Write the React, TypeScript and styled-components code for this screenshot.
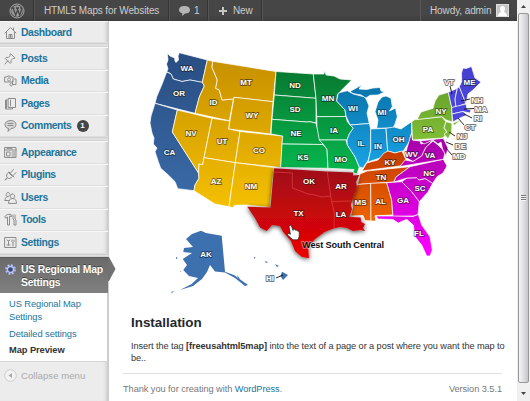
import React from "react";
import styled, { createGlobalStyle, css } from "styled-components";

const GlobalStyle = createGlobalStyle`
  * { box-sizing: border-box; }
  body { margin: 0; background: #fff; overflow: hidden; font-family: "Liberation Sans", Arial, sans-serif; }
`;

const Window = styled.div`display: flex; width: 530px; height: 401px; overflow: hidden;`;
const Page = styled.div`width: 517px; display: flex; flex-direction: column;`;
const AdminBar = styled.header`
  height: 21px; flex: none; display: flex; color: #ccc; font-size: 10px; letter-spacing: -0.13px;
  background: linear-gradient(#464646 70%, #3e3e3e);
`;
const BarItem = styled.div<{ $w: number; $pad?: number; $gap?: number }>`
  width: ${p => p.$w}px; padding-left: ${p => p.$pad ?? 9}px; display: flex; align-items: center;
  gap: ${p => p.$gap ?? 5}px; border-right: 1px solid #555; box-shadow: inset -1px 0 #353535; white-space: nowrap;
`;
const Account = styled.div`
  margin-left: auto; width: 97px; padding-left: 9px; display: flex; align-items: center; gap: 5px;
  border-left: 1px solid #595959; white-space: nowrap; letter-spacing: -0.1px;
`;
const Body = styled.div`display: flex; flex: 1; min-height: 0;`;
const Sidebar = styled.nav`
  width: 109px; flex: none; background: #ececec; border-right: 1px solid #ccc;
  box-shadow: inset -4px 0 4px -3px #bbb; display: flex; flex-direction: column;
`;
const MenuRow = styled.a<{ $first?: boolean }>`
  height: ${p => (p.$first ? 22 : 22.5)}px; flex: none; display: flex; align-items: center; padding: 0 0 0 4px; gap: 4px;
  color: #21759b; font-size: 10.4px; letter-spacing: -0.4px; font-weight: bold; white-space: nowrap;
  border-top: 1px solid #f8f8f8; border-bottom: 1px solid #dedede;
`;
const IconBox = styled.svg`
  width: 13px; height: 13px; flex: none; fill: none; stroke: #8c8c8c; stroke-width: 1; stroke-linejoin: round; stroke-linecap: round;
`;
const Separator = styled.div<{ $h: number }>`
  height: ${p => p.$h}px; flex: none; background: #dfdfdf; border-top: 1px solid #cfcfcf; border-bottom: 1px solid #d4d4d4;
`;
const Count = styled.span`
  width: 12px; height: 12px; margin-left: 1px; border-radius: 6px; background: #464646; color: #fff;
  font-size: 8px; line-height: 12px; text-align: center; letter-spacing: 0;
`;
const Current = styled.div`
  position: relative; height: 36px; flex: none; display: flex; gap: 5px; padding: 5px 0 0 5px; color: #fff;
  font-size: 10.4px; line-height: 13.3px; font-weight: bold; letter-spacing: -0.2px; white-space: nowrap;
  background: linear-gradient(#6a6a6a, #808080); border-top: 1px solid #5c5c5c; text-shadow: 0 -1px #444;
`;
const Arrow = styled.svg`position: absolute; left: 108px; top: -1px; width: 8px; height: 24px;`;
const SubMenu = styled.div`
  height: 69px; flex: none; background: #fff; border-bottom: 1px solid #d5d5d5; margin-right: 1px;
  padding: 5px 0 0 9px; display: flex; flex-direction: column; gap: 3px; font-size: 9.3px; line-height: 13.5px;
  color: #21759b; white-space: nowrap; letter-spacing: -0.07px;
`;
const SubItem = styled.a<{ $on?: boolean }>`
  ${p => p.$on && css`color: #333; font-weight: bold;`}
`;
const Collapse = styled.div`
  height: 28px; display: flex; align-items: center; gap: 4px; padding-left: 4px; color: #aaa; font-size: 9.6px; letter-spacing: 0.02px;
`;
const Main = styled.main`flex: 1; background: #fff; display: flex; flex-direction: column; min-width: 0;`;
const MapArt = styled.svg`
  width: 408px; height: 280px; flex: none; display: block; overflow: visible;
  font-family: "Liberation Sans", Arial, sans-serif;
`;
const Heading = styled.h2`
  margin: 12px 0 0 22px; font-size: 13.4px; line-height: 20px; color: #23282d;
`;
const Copy = styled.p`
  margin: 7px 0 0 22px; font-size: 9.2px; letter-spacing: -0.075px; line-height: 12px; color: #333; white-space: nowrap;
`;
const Footer = styled.footer`
  margin: 9px 15px 0 14px; border-top: 1px solid #dfdfdf; padding-top: 9px; display: flex; justify-content: space-between;
  font-size: 9.2px; line-height: 13px; color: #777; white-space: nowrap; letter-spacing: -0.04px;
`;
const Link = styled.a`color: #21759b;`;
const Scroll = styled.div`
  width: 13px; background: #f0f0f0; display: flex; flex-direction: column; align-items: center;
`;
const ScrollEnd = styled.svg`width: 13px; height: 13px; flex: none;`;
const Thumb = styled.div`
  width: 11px; height: 370px; border: 1px solid #979797; border-radius: 2px; display: flex; align-items: center; justify-content: center;
  background: linear-gradient(90deg, #f5f5f5, #e2e2e5 45%, #c5c5cb);
`;
const Grip = styled.div`width: 5px; height: 6px; background: repeating-linear-gradient(#777 0 1px, #f5f5f5 1px 2px);`;

const icons: Record<string, React.ReactNode> = {
  Dashboard: <path d="M1 7 6.5 1.5 12 7M2.5 6.5v6h8v-6M5 12V8.5h3V12M6.5 8.5V12M9.5 2v2" />,
  Posts: <path d="m7 2 4 4-1 .7-1-.3-2 2 .2 2-1 1-5-5 1-1 2 .2 2-2-.2-1zM4 8.5 1 12" />,
  Media: <path d="M1 3h2l.7-1h2l.8 1H9v5H1zM5 4a1.5 1.5 0 1 0 .1 0M10.5 5H12v5.5H8.5V7M8.5 10.5a1.3 1.3 0 1 1-1.4-1.2" />,
  Pages: <path d="M4.5 1.5h7v9h-7zM3 3H1.5v9h7v-1.500M2.500 3v8M6.500 3v6" />,
  Comments: <path fill="#d6d6d6" d="M6.500 1.500C10 1.500 12 3 12 5.500s-2 4-5 4l-3 3 .5-3C2 9 1 7.500 1 5.500s2-4 5.500-4zM4 4.500h5M4 6.500h5" />,
  Appearance: <path d="M1 1.500h11v10H1zM1 4h11M3 6h3v4H3zM8 6h3M8 8h3M8 10h3M3 2.700h5" />,
  Plugins: <path d="m4.500 4.500 4 4c-1.500 2-3.500 2.300-5 1.500L2 11.500M4.500 4.500C2.500 5.500 2 8 3.200 9.500L1 12M5 4l5 5M6.500 5 9.500 1.500M9 7.500 12 4.500" />,
  Users: <path d="M4 1.500a2 2 0 1 0 .1 0M1 9.500c0-3 1-4 3-4M8.500 3a2.200 2.200 0 1 0 .1 0M4.500 12c0-3 1.500-4.500 4-4.500s4 1.500 4 4.500zM1 9.500h4" />,
  Tools: <path d="M1 3.500c1-2 3-2.500 6-2l.5 2-2-.3V12H3.500V4L2 5zM9 2v4l1 1v5h2V7l-1-1V2" />,
  Settings: <path d="M1 1.500h11v10H1zM3 4l1.500 1L6 4M4.500 5v4M3 9h3M8 4v1.500l1 1 1-1V4M9 6.500V10" />,
};

const MenuItem = ({ name, first, children }: { name: string; first?: boolean; children?: React.ReactNode }) => (
  <MenuRow $first={first}><IconBox viewBox="0 0 13 13">{icons[name]}</IconBox>{name}{children}</MenuRow>
);

const gradients: [string, string, string, number, number][] = [
  ["pacific", "#294f84", "#4073b2", 60, 240],
  ["mountain", "#c99200", "#f4c000", 65, 208],
  ["plains", "#087a31", "#05b64e", 72, 170],
  ["lakes", "#0873aa", "#19a4e5", 85, 168],
  ["south", "#c63d00", "#ed6300", 151, 220],
  ["atlantic", "#a900a9", "#fa00ff", 140, 250],
  ["mid", "#69a42c", "#80bd35", 92, 138],
  ["england", "#4640cf", "#4c48df", 66, 122],
  ["central", "#a51019", "#e60000", 175, 250],
];

const regions: [string, string[]][] = [
  ["pacific", [
    "167.300 53.300 170 56 174.700 58 175 61 176 62.500 178.500 60 178 56 179.300 52.700 207.300 60 202.300 82.300 190 80 182 81.500 173.300 79 171 74 166.700 71.500 168 69 166.500 64 168 60",
    "166.700 72 171 74 173.300 79 182 81.500 190 80 202.300 82.300 204.300 86 201 93 199.300 97 195 113.300 155 103.300 156.700 96.700 161.700 85",
    "155 103.300 177.300 110 172.300 132 198.500 173 199 178.300 195 185 194 190.700 177.700 188.700 175 181.700 168.300 175 160.700 168.300 158.300 161.700 155 151.700 157 148 153.300 144 154 138 152 133 150 123 151 116",
  ]],
  ["mountain", [
    "207.300 60 212.700 61.300 212 67.300 217.300 80 215.700 88.300 219.300 90 222 100 233.500 99 229.300 120.700 195 113.300 199.300 97 204.300 86 202.300 82.300",
    "212.700 61.300 276 71.500 273 101.700 234 97.300 233.500 99 222 100 219.300 90 215.700 88.300 217.300 80 212 67.300",
    "234 97.300 273 101.700 270.500 134 228.500 129",
    "177.300 110 212 118.300 204 157.700 202.700 164.700 199 164 198.500 173 172.300 132",
    "212 118.300 229.700 121 228.500 129 240 131.500 235.300 162.700 204 157.700",
    "240 131.500 282.700 136 280.700 167.500 235.300 162.700",
    "204 157.700 235.300 162.700 229 206.700 215 204 194 190.700 195 185 199 178.300 198.500 173 199 164 202.700 164.700",
    "235.300 162.700 274 167.500 270 207.300 246.700 205 234.300 205.300 233.300 207.700 229 206.700",
  ]],
  ["plains", [
    "276 71.500 313.300 74 316 98.300 274.300 95",
    "274.300 95 316 98.300 316 123 310 121.700 306.700 122 272 119.300",
    "272 119.300 306.700 122 310 121.700 316 123.300 318 131 320 140 323 144.500 282 144 282.700 136 271 134",
    "282 144 323 144.500 327 149.300 328 168.300 280.700 167.500",
    "313.300 74 324 74 324.700 70 326 75 334 76 340 79 351.700 80 341.700 90 337.300 95 336.700 101 345 110 346 116.500 316.700 116.700 316 98.300",
    "316.700 116.700 346 116.500 347.300 121.700 353.300 128.300 349.300 134 347 140 319.300 140 317 127",
    "319.300 140 346 140 347.300 145 355 156.700 359.300 167 357 174 353 172.500 354 169.500 328 168.300 327 149.300 323 144",
  ]],
  ["lakes", [
    "338.300 93 347.300 90.700 353.300 94 365 97 367 101 369 106 367 113 369.300 123.500 350 125 346 116 345 110 336.700 101",
    "350 91.500 361.700 85 359 89 366.700 89.500 373 88 380 87.500 381 91 385 91.700 378 95 370 95.300 366 98 361 95 353 93.500",
    "382 97 386 96 391 98.300 392.300 106.700 389.500 111 395.500 108 397.300 116.700 395 124 393 128 376.700 128.300 378 120 375 111.700 378 102",
    "350 125 369.300 123.500 370.700 129 370.700 150 368.300 160 363 168 359.300 167 355 156.700 347.300 145 347 140 349.300 134 353.300 128",
    "370.700 129 386 128.300 387.700 151 380 158 368 162 370.700 150",
    "386 128.300 394 127 401 129 411.700 121.700 411.700 132 409.300 141.700 403.300 151 395 153 387.700 151",
  ]],
  ["south", [
    "362 171 366.700 163 378 160 384 153 388 151 395 153 402 151 406 160 400 166",
    "360 174 367 171 410 166.700 396 177 394 182 357.500 184.500",
    "357.500 184.500 370.700 183.300 371 221 365 220.500 363 215.500 350.700 216 352.700 207 352 200 355 190",
    "370.700 183.300 386.700 182.700 391.700 200 392.700 215 375 215.700 375.700 221 371 221",
  ]],
  ["atlantic", [
    "386.700 182.700 401.700 181.700 411.700 191.700 419.300 201.700 418 214.500 413.500 216 393 216.500 391.700 200",
    "376 216 393 216 413 216.500 418.300 214.500 421.700 225 430 236.700 432.300 250 430 256 426.700 256 421.700 245 415 236.700 413.300 225 406.700 219.300 398.300 223 393 219.500 378 219",
    "401.700 181.700 407 178 416.700 177.700 419 180 425 178.500 432.700 183.300 428 192 419.300 201.700 411.700 191.700",
    "410 166.700 443.300 159.300 447 166 443 173 437 176.700 432.700 183.300 425 178.500 419 180 416.700 177.700 407 178 394 182 396 177",
    "411.700 133 412.500 140 420 141 421 144 433 140 426 147 421.700 156 413 161.500 405 157 407 148",
    "405 160 413 161.500 421.700 156 426 147 433 141 438 145 442 149 445 153 443.300 159.300 400 166.500",
    "420 141 443.300 138.300 448 148 446 156 442.500 149 441 142 438 144 433 140 424 144",
  ]],
  ["mid", [
    "411.700 121.700 415 119.500 441.700 116.700 446 121.700 444 128 447 133 443 138 412.500 140",
    "417 119.500 421 112 433 108.300 435 101 439 95 448.300 92.300 451.700 107 452.300 122 446 120 441.700 116.700",
    "446 121.700 452 123.300 451.700 132 448 139 444 134 447 132 444 128",
    "453 123 461 120 454 125.500",
  ]],
  ["england", [
    "448.300 92.300 457.300 88.300 455 99 456 107 451.700 107.500",
    "457.300 88.300 459.300 86.700 466 103.500 456 107 455 99",
    "459.300 86.700 461.700 81.700 461.500 73 463 68 466 68.500 471.500 66.500 475 78 481 82 473 90 468 94 466 103.500",
    "451.700 107.500 466 104 467 109 471 110 470 113 463 111.500 452 114",
    "452 114 463 111.500 467 115 460 118 453 122",
  ]],
];

const islands = [
  "201 230.700 206 233 221.700 235.700 225 271.700 234 275 248 285 245 286 235 278 225 272.500 215 271.500 210 265 207 272 202 279 193 286 180 290 191.700 284 198 278 189 276 183.300 270 187 265 182.700 259 192 253 183.300 252 184 248 193 247 186 239 192 234",
  "282 271.700 288 275 283 280 280.500 276",
  "254 257 256 258 254 258.500", "265 261 268 262 266 263", "275 264 279 266 277 267",
  "237 275 240 279 238 278", "241 281 246 286 243 284", "176 257 178 258 176 259", "180 271 181 271 181 272",
  "171 292 174 291 172 293",
];

const labels: [string, number, number][] = [
  ["WA", 187, 70.500], ["OR", 179, 96], ["CA", 169.500, 155], ["ID", 213.500, 104.500], ["MT", 246, 85], ["WY", 252, 118],
  ["NV", 191, 136], ["UT", 222, 144], ["CO", 259, 153], ["AZ", 216, 184], ["NM", 251, 189], ["ND", 295, 88],
  ["SD", 295, 111.500], ["NE", 296, 135.500], ["KS", 303, 160], ["MN", 328, 101], ["IA", 334, 133], ["MO", 341, 162],
  ["WI", 353, 110.500], ["MI", 382, 114.500], ["IL", 361, 146], ["IN", 378, 148.500], ["OH", 398.500, 141.500], ["KY", 390, 164.500],
  ["TN", 381, 180], ["MS", 360.500, 204.500], ["AL", 380.500, 203.500], ["GA", 403, 202.500], ["SC", 420, 190.500], ["NC", 429, 175.500],
  ["WV", 411.500, 156.500], ["VA", 430, 158], ["FL", 419, 236], ["PA", 428, 132], ["NY", 441, 113.500], ["ME", 469.500, 84.500],
  ["OK", 309, 184], ["AR", 341, 188.500], ["TX", 298.500, 216], ["LA", 341, 216.500], ["AK", 206, 257],
];
const outer: [string, number, number, string][] = [
  ["VT", 449, 85, "M450 86 452 94"], ["NH", 477, 102.500, "M461 101 470 99"], ["MA", 481, 112, "M464 109 474 108.500"],
  ["RI", 478, 121, "M464 114 472 118"], ["CT", 470, 130, "M458 118 464 125"], ["NJ", 462, 139, "M449 132 455 136"],
  ["DE", 460.500, 149, "M446 142 453 145"], ["MD", 459, 158.500, "M445 147 452 155"], ["HI", 270, 281, "M276 278 283 275"],
];

const RegionalMap = () => (
  <MapArt viewBox="109 21 408 280">
    <defs>
      {gradients.map(([id, a, b, y1, y2]) => (
        <linearGradient key={id} id={id} gradientUnits="userSpaceOnUse" x1="0" x2="0" y1={y1} y2={y2}>
          <stop stopColor={a} /><stop offset="1" stopColor={b} />
        </linearGradient>
      ))}
      <filter id="lift" x="-20%" y="-20%" width="140%" height="140%"><feDropShadow dx="0" dy="1" stdDeviation="2.500" floodOpacity=".75" /></filter>
    </defs>
    {regions.map(([id, shapes]) => (
      <g key={id} fill={`url(#${id})`} stroke="#fff" strokeOpacity=".85" strokeWidth=".85" strokeLinejoin="round">
        {shapes.map(s => <polygon key={s} points={s} />)}
      </g>
    ))}
    <g fill="#3d70ae">{islands.map(s => <polygon key={s} points={s} />)}</g>
    <path fill="url(#central)" filter="url(#lift)" d="M274 168.300 327 171.500 353 172.500 353 175.500 359.300 175 356 182 357 187 354 195 350.700 205 352 209 349.300 217 360.700 217.500 361 222 365 224 363 228 365 231 360 230 353 231 347 228 340 227 335 228 325 231.700 315 239 308 247 309 258.300 301.700 256.700 295 251 291 241 283 231.700 280 226 272 225 266.700 231 260 227.500 255 218 247.300 206.700 270.500 207.500Z" />
    <path fill="none" stroke="#ed5b5b" strokeWidth=".6" opacity=".8" d="M274 172 292.300 173 292.300 188 302 191.500 308 194 315 195 322 197 330.700 196 331.700 202 334.300 213 334 228M327.300 172 330.700 196M331.700 201.500 351 201" />
    <g textAnchor="middle" fontSize="8" fontWeight="bold" fill="#fff" paintOrder="stroke" strokeLinejoin="round">
      <g stroke="#1b1b1b" strokeOpacity=".55" strokeWidth="1.800">{labels.map(([t, x, y]) => <text key={t} x={x} y={y}>{t}</text>)}</g>
      {outer.map(([t, x, y, d]) => <g key={t}>
        <path d={d} stroke="#111" strokeWidth=".9" fill="none" />
        <text x={x} y={y} stroke="#777" strokeWidth="1.900">{t}</text>
      </g>)}
    </g>
    <path fill="#fff" stroke="#222" strokeWidth=".7" strokeLinejoin="round" d="m289 226 1-1 1.500 1 1.500 4.500.3-1.500 1.500.2.500 1 1-.4 1 1.200 1-.2 1 2-.2 4-1.200 3h-5l-5.500-5 .5-1.500 2.500 1z" />
    <text x="302" y="248" fontSize="9.300" fontWeight="bold" fill="#111" stroke="#fff" strokeWidth="1.500" strokeOpacity=".5" paintOrder="stroke" textLength="82">West South Central</text>
  </MapArt>
);

const WordPressLogo = () => (
  <svg width="16" height="16" viewBox="0 0 16 16" fill="none" stroke="#aaa">
    <circle cx="8" cy="8" r="7" /><circle cx="8" cy="8" r="5.800" fill="#999" stroke="none" />
    <path stroke="#444" strokeWidth="1.300" d="M2.500 5h3M7 5h3M4 5l2.700 7L8.300 7.700M8 5l2.700 7L12.500 7c.3-1.500-.8-2-.8-3" />
  </svg>
);

export default function App() {
  return (
    <><GlobalStyle /><Window>
      <Page>
        <AdminBar>
          <BarItem $w={35}><WordPressLogo /></BarItem>
          <BarItem $w={135}>HTML5 Maps for Websites</BarItem>
          <BarItem $w={39} $gap={4}>
            <svg width="11" height="10" viewBox="0 0 11 10"><path fill="#b5b5b5" d="M5.500 0C9 0 11 1.500 11 4S9 7.500 6 7.500L3 10l.3-2.700C1 7 0 5.500 0 4 0 1.500 2 0 5.500 0" /></svg>1
          </BarItem>
          <BarItem $w={54} $pad={10} $gap={6}>
            <svg width="8" height="8" viewBox="0 0 8 8"><path stroke="#c5c5c5" strokeWidth="2" d="M4 0v8M0 4h8" /></svg>New
          </BarItem>
          <Account>Howdy, admin
            <svg width="13" height="13" viewBox="0 0 13 13"><rect width="13" height="13" fill="#ddd" /><rect x="1" y="1" width="11" height="11" fill="#c5c5c5" /><path fill="#fff" d="M4 4.500a2.500 2.500 0 0 1 5 0c0 1.500-.5 2.500-1 3 0 1 3 1 3 4.500H2c0-3.500 3-3.500 3-4.500-.5-.5-1-1.500-1-3" /></svg>
          </Account>
        </AdminBar>
        <Body>
          <Sidebar>
            <MenuItem name="Dashboard" first />
            <Separator $h={4} />
            <MenuItem name="Posts" /><MenuItem name="Media" /><MenuItem name="Pages" />
            <MenuItem name="Comments"><Count>1</Count></MenuItem>
            <Separator $h={4} />
            {["Appearance", "Plugins", "Users", "Tools", "Settings"].map(n => <MenuItem key={n} name={n} />)}
            <Separator $h={3} />
            <Current>
              <svg width="11" height="13" viewBox="0 0 11 13" fill="none"><circle cx="5.500" cy="6.500" r="4.300" stroke="#b5c2ff" strokeWidth="2" strokeDasharray="1.800 1.570" /><circle cx="5.500" cy="6.500" r="3" stroke="#b8c6ff" strokeWidth="1.300" /><circle cx="5.500" cy="6.500" r="2.100" fill="#394789" /></svg>
              <span>US Regional Map<br />Settings</span>
              <Arrow viewBox="0 0 8 24"><path fill="#717171" d="M0 0h1l6.500 12L1 24H0z" /></Arrow>
            </Current>
            <SubMenu>
              <SubItem>US Regional Map<br />Settings</SubItem><SubItem>Detailed settings</SubItem><SubItem $on>Map Preview</SubItem>
            </SubMenu>
            <Collapse>
              <svg width="13" height="13" viewBox="0 0 13 13"><circle cx="6.500" cy="6.500" r="5.800" fill="#f3f3f3" stroke="#ccc" /><path fill="#aaa" d="M8 4v5L4.500 6.500z" /></svg>
              Collapse menu
            </Collapse>
          </Sidebar>
          <Main>
            <RegionalMap />
            <Heading>Installation</Heading>
            <Copy>Insert the tag <b>[freeusahtml5map]</b> into the text of a page or a post where you want the map to<br />be..</Copy>
            <Footer><span>Thank you for creating with <Link>WordPress</Link>.</span><span>Version 3.5.1</span></Footer>
          </Main>
        </Body>
      </Page>
      <Scroll>
        <ScrollEnd viewBox="0 0 13 13"><path fill="#444" d="M4 8h5L6.500 5z" /></ScrollEnd>
        <Thumb><Grip /></Thumb>
        <ScrollEnd viewBox="0 0 13 13"><path fill="#444" d="M4 9h5L6.500 12z" /></ScrollEnd>
      </Scroll>
    </Window></>
  );
}
